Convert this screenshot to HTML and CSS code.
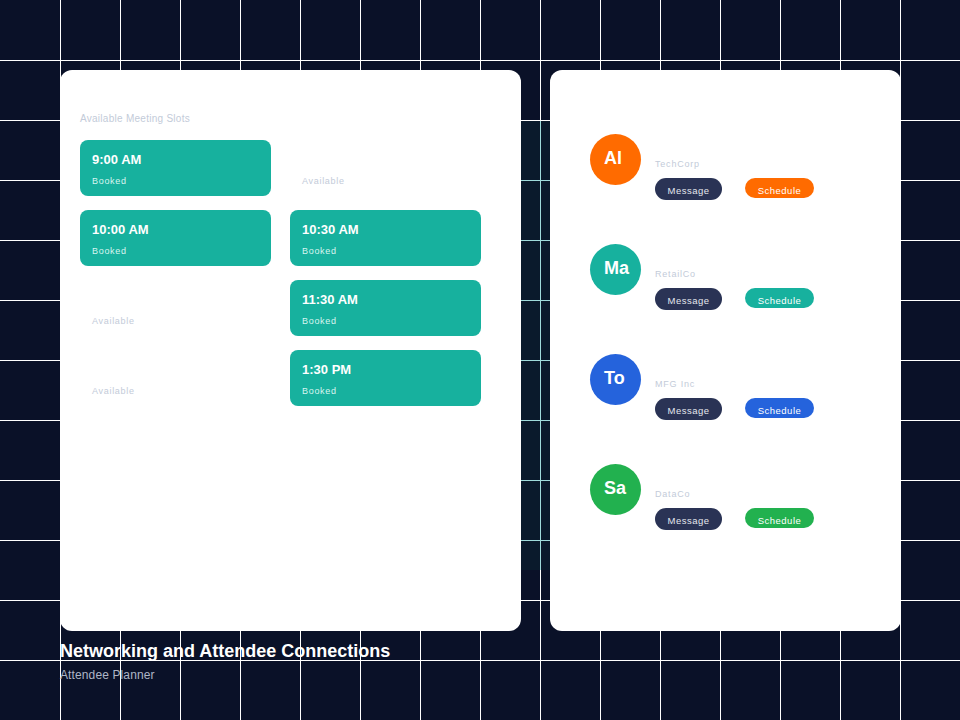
FILE: index.html
```html
<!DOCTYPE html>
<html lang="en">
<head>
    <meta charset="UTF-8">
    <title>Networking and Attendee Connections</title>
    <link rel="stylesheet" href="styles.css">
</head>
<body>

    <!-- Background lines -->
    <div class="grid-vertical"></div>
    <div class="grid-horizontal"></div>
    <div class="glow"></div>

    <div class="page">
        <div class="cards">

            <!-- Meeting slots -->
            <div class="card slots-card">
                <div class="card-label">Available Meeting Slots</div>
                <div class="slots">
                    <div class="slot booked"><div class="slot-time">9:00 AM</div><div class="slot-status">Booked</div></div>
                    <div class="slot"><div class="slot-status">Available</div></div>
                    <div class="slot booked"><div class="slot-time">10:00 AM</div><div class="slot-status">Booked</div></div>
                    <div class="slot booked"><div class="slot-time">10:30 AM</div><div class="slot-status">Booked</div></div>
                    <div class="slot"><div class="slot-status">Available</div></div>
                    <div class="slot booked"><div class="slot-time">11:30 AM</div><div class="slot-status">Booked</div></div>
                    <div class="slot"><div class="slot-status">Available</div></div>
                    <div class="slot booked"><div class="slot-time">1:30 PM</div><div class="slot-status">Booked</div></div>
                </div>
            </div>

            <!-- Attendees -->
            <div class="card people-card">
                <div class="person">
                    <div class="avatar orange">Al</div>
                    <div class="person-info">
                        <div class="company">TechCorp</div>
                        <div class="actions">
                            <button class="btn message">Message</button>
                            <button class="btn schedule orange">Schedule</button>
                        </div>
                    </div>
                </div>
                <div class="person">
                    <div class="avatar teal">Ma</div>
                    <div class="person-info">
                        <div class="company">RetailCo</div>
                        <div class="actions">
                            <button class="btn message">Message</button>
                            <button class="btn schedule teal">Schedule</button>
                        </div>
                    </div>
                </div>
                <div class="person">
                    <div class="avatar blue">To</div>
                    <div class="person-info">
                        <div class="company">MFG Inc</div>
                        <div class="actions">
                            <button class="btn message">Message</button>
                            <button class="btn schedule blue">Schedule</button>
                        </div>
                    </div>
                </div>
                <div class="person">
                    <div class="avatar green">Sa</div>
                    <div class="person-info">
                        <div class="company">DataCo</div>
                        <div class="actions">
                            <button class="btn message">Message</button>
                            <button class="btn schedule green">Schedule</button>
                        </div>
                    </div>
                </div>
            </div>
        </div>

        <!-- Footer title -->
        <div class="footer">
            <h1>Networking and Attendee Connections</h1>
            <p>Attendee Planner</p>
        </div>
    </div>

</body>
</html>
```
FILE: styles.css
```css
html, body {
    margin: 0;
    padding: 0;
    height: 720px;
    overflow: hidden;
}
body {
    background-color: #0a1128;
    font-family: "Liberation Sans", Arial, sans-serif;
    position: relative;
}
.grid-vertical, .grid-horizontal, .glow {
    position: absolute;
}
.grid-vertical {
    top: 0;
    left: 60px;
    right: 0;
    bottom: 0;
    background-image: linear-gradient(to right, #ffffff 1px, transparent 1px);
    background-size: 60px 60px;
}
.grid-horizontal {
    top: 60px;
    left: 0;
    right: 0;
    bottom: 0;
    background-image: linear-gradient(to bottom, #ffffff 1px, transparent 1px);
    background-size: 60px 60px;
}
/* tinted band behind the gap between the cards, lines go teal in it */
.glow {
    top: 121px;
    left: 480px;
    width: 120px;
    height: 449px;
    background-color: #0a1a2c;
    background-image:
        linear-gradient(to right, #9fdcdc 1px, transparent 1px),
        linear-gradient(to bottom, #9fdcdc 1px, transparent 1px);
    background-size: 60px 60px;
    background-position: 0 59px;
}
.page {
    position: relative;
    padding: 70px 59px 0 60px;
}
.cards {
    display: grid;
    grid-template-columns: 461px 351px;
    gap: 29px;
    height: 561px;
}
.card {
    background: white;
    border-radius: 12px;
}
.slots-card {
    padding: 43px 40px 0 20px;
}
.card-label {
    font-size: 10px;
    line-height: 12px;
    letter-spacing: 0.27px;
    color: #c3cbd9;
    margin-bottom: 15px;
}
.slots {
    display: grid;
    grid-template-columns: 191px 191px;
    grid-auto-rows: 56px;
    gap: 14px 19px;
}
.slot {
    display: flex;
    flex-direction: column;
    justify-content: flex-end;
    padding: 0 12px 9px;
    border-radius: 8px;
    color: #c3cbd9;
}
.slot.booked {
    background-color: #17b19e;
    color: #d9f5f0;
}
.slot-time {
    font-size: 13px;
    line-height: 16px;
    font-weight: bold;
    color: white;
    margin-bottom: 8px;
}
.slot-status {
    font-size: 9px;
    line-height: 11px;
    letter-spacing: 0.7px;
}
.people-card {
    padding: 64px 40px 0 40px;
}
.person {
    display: flex;
    height: 110px;
}
.avatar {
    width: 51px;
    height: 51px;
    border-radius: 50%;
    box-sizing: border-box;
    padding: 14px 0 0 14px;
    font-size: 18px;
    line-height: 20px;
    font-weight: bold;
    color: white;
}
.person-info {
    margin-left: 14px;
    padding-top: 25px;
}
.company {
    font-size: 9px;
    line-height: 11px;
    letter-spacing: 0.8px;
    color: #c3cbd9;
    margin-bottom: 8px;
}
.actions {
    display: flex;
    align-items: flex-start;
    gap: 23px;
}
.btn {
    border: none;
    border-radius: 11px;
    font-family: inherit;
    font-size: 9.5px;
    line-height: 12px;
    letter-spacing: 0.5px;
    color: white;
    padding: 7px 12px 3px;
    cursor: pointer;
}
.btn.message {
    background-color: #2a3355;
    color: #e4e7ee;
    width: 67px;
    padding-left: 0;
    padding-right: 0;
}
.btn.schedule {
    padding-left: 0;
    padding-right: 0;
    padding-bottom: 1px;
    border-radius: 10px;
    width: 69px;
}
.orange { background-color: #ff6b00; }
.teal { background-color: #17b19e; }
.blue { background-color: #2563dc; }
.green { background-color: #22b14f; }
.footer {
    padding-top: 10px;
}
.footer h1 {
    margin: 0;
    font-size: 18px;
    line-height: 20px;
    color: white;
}
.footer p {
    margin: 7px 0 0;
    font-size: 12px;
    line-height: 14px;
    letter-spacing: 0.12px;
    color: #aeb6c6;
}
```
